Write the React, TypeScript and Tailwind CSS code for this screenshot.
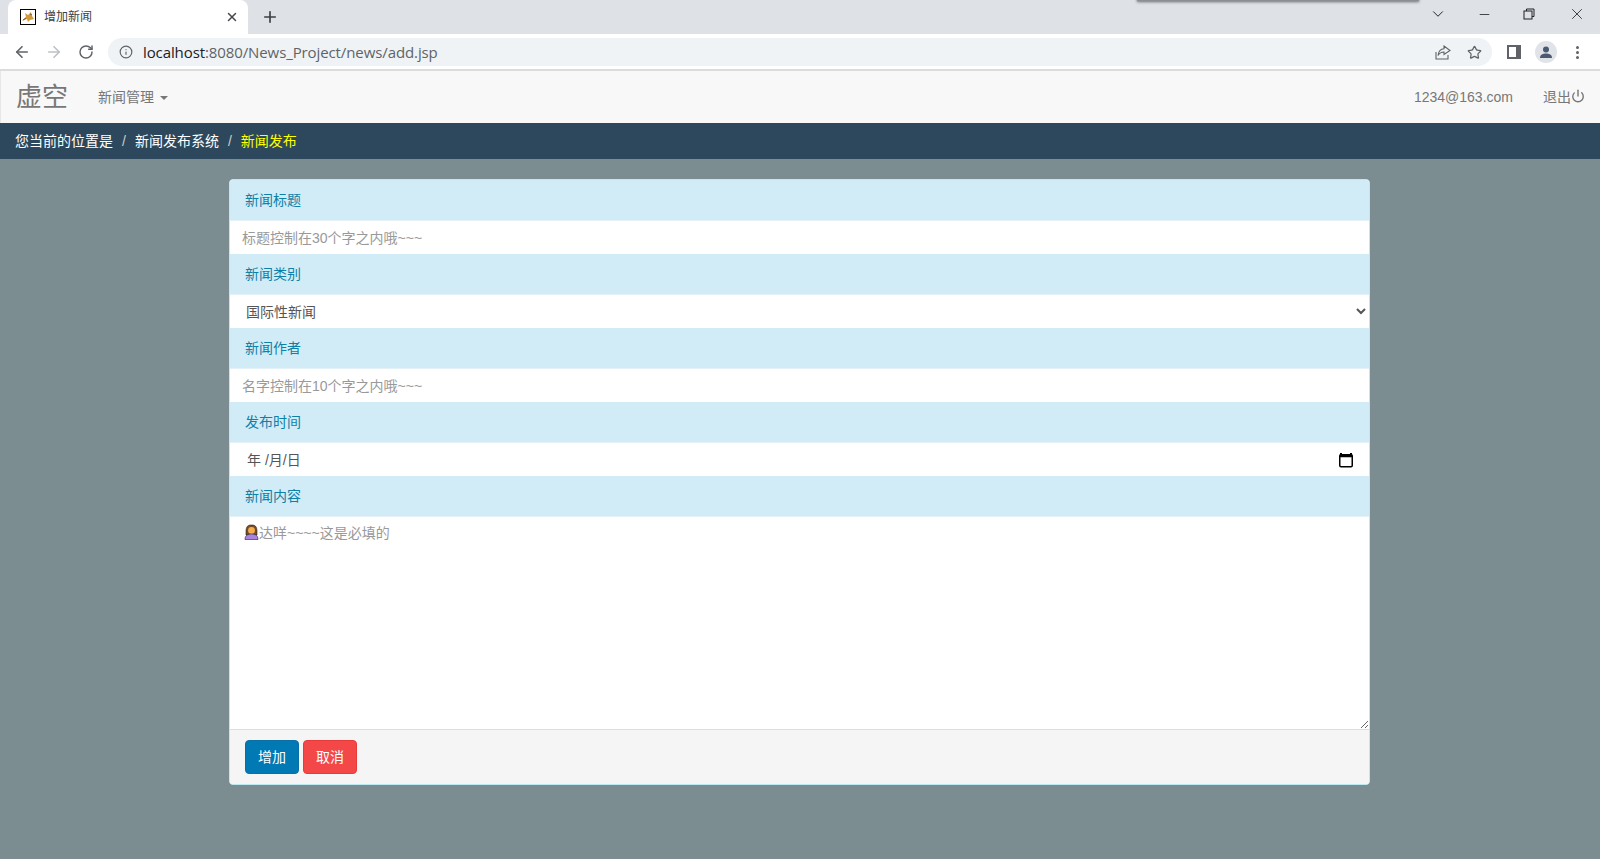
import React from 'react';
import { ArrowLeft, ArrowRight, RotateCw, Info, Star, X, Plus, ChevronDown, Minus, Power } from 'lucide-react';

const cjk = { fontFamily: '"Liberation Sans", "Noto Sans CJK SC", sans-serif' };

const Heading = ({ children }: { children: React.ReactNode }) => (
  <div className="h-[41px] bg-[#d2ecf7] border-b border-[#e4f1f8] pl-[15px] flex items-center text-sm text-[#0d80a8]">
    {children}
  </div>
);

function TabBar() {
  return (
    <div className="relative h-[34px] bg-[#dee1e6] flex items-end">
      {/* shadow of another window peeking in */}
      <div className="absolute left-[1137px] top-[-4px] w-[282px] h-[5px] bg-[#8c9095] shadow-[0_1px_3px_rgba(60,60,60,0.7)]" />
      <div className="ml-2 w-[240px] h-[34px] bg-white rounded-t-lg flex items-center pl-[12px] pr-[9px]">
        <svg width="16" height="16" viewBox="0 0 16 16" className="shrink-0">
          <rect x="0.5" y="0.5" width="15" height="15" fill="#fff" stroke="#000" />
          <path d="M2 12 L6 8 L5 4 L8 6 L11 3 L12 7 L14 10 L10 11 L8 13 L7 10 Z" fill="#d39a3a" />
          <path d="M3 11 L6 9 M10 5 L12 6" stroke="#6d5a3a" strokeWidth="1" />
        </svg>
        <span className="ml-2 text-xs text-[#3c4043] flex-1">增加新闻</span>
        <X size={14} strokeWidth={2.5} className="text-[#45484c]" />
      </div>
      <Plus size={18} strokeWidth={2.2} className="ml-[13px] mb-[8px] text-[#3c4043]" />
      <div className="ml-auto flex items-center self-start h-[28px] text-[#202124]">
        <ChevronDown size={18} strokeWidth={1.3} className="mr-[30px]" />
        <Minus size={15} strokeWidth={1.3} className="mr-[31px]" />
        <svg width="12" height="12" viewBox="0 0 12 12" fill="none" stroke="currentColor" className="mr-[33px]">
          <rect x="1" y="3" width="8" height="8" />
          <path d="M3.5 3 V1 H11 V8.5 H9" />
        </svg>
        <X size={18} strokeWidth={1.1} className="mr-[14px]" />
      </div>
    </div>
  );
}

function Toolbar() {
  return (
    <div className="h-[37px] bg-white border-b-2 border-[#dcdcdc] flex items-start pt-[4px] shrink-0">
      <ArrowLeft size={18} strokeWidth={2.2} className="ml-[13px] mt-[5px] text-[#5f6368]" />
      <ArrowRight size={18} strokeWidth={2.2} className="ml-[14px] mt-[5px] text-[#bdc1c6]" />
      <RotateCw size={16} strokeWidth={2.2} className="ml-[15px] mt-[6px] text-[#5f6368]" />
      <div className="ml-[14px] w-[1384px] h-[28px] rounded-full bg-[#eff3f5] flex items-center pl-[11px] pr-[10px]">
        <Info size={14} strokeWidth={2} className="text-[#5f6368]" />
        <span className="ml-[10px] text-[15px] tracking-[-0.1px] text-[#5f6368]" style={{ fontFamily: '"Open Sans", sans-serif' }}>
          <span className="text-[#202124]">localhost</span>:8080/News_Project/news/add.jsp
        </span>
        <svg width="16" height="16" viewBox="0 0 16 16" fill="none" stroke="#5f6368" strokeWidth="1.1" className="ml-auto mr-[16px]">
          <path d="M1 8 V15 H13 V11" />
          <path d="M9 2 L15 6.5 L9 10.5 V8 C6 8 4.5 9 3 11.5 C3.5 7.5 5.5 5 9 4.8 Z" />
        </svg>
        <Star size={15} strokeWidth={2} className="mr-0 text-[#5f6368]" />
      </div>
      <svg width="14" height="14" viewBox="0 0 14 14" className="ml-[15px] mt-[7px]">
        <rect width="14" height="14" fill="#5f6368" />
        <rect x="2" y="2" width="7" height="10" fill="#fff" />
      </svg>
      <div className="ml-[14px] mt-[3px] w-[22px] h-[22px] rounded-full bg-[#e0e3e8] flex items-center justify-center">
        <svg width="14" height="14" viewBox="0 0 14 14" fill="#4a5a70">
          <circle cx="7" cy="4.5" r="3" />
          <path d="M1 13 C1 9.5 4 8.5 7 8.5 C10 8.5 13 9.5 13 13 Z" />
        </svg>
      </div>
      <div className="ml-[19px] mt-[8px] flex flex-col gap-[2px]">
        <span className="w-[3px] h-[3px] rounded-full bg-[#5f6368]" />
        <span className="w-[3px] h-[3px] rounded-full bg-[#5f6368]" />
        <span className="w-[3px] h-[3px] rounded-full bg-[#5f6368]" />
      </div>
    </div>
  );
}

function Navbar() {
  return (
    <div className="h-[52px] bg-[#f8f8f8] border-l border-[#e7e7e7] flex items-center text-sm text-[#777] pl-[15px] pr-[15px]">
      <span className="text-[26px] leading-none">虚空</span>
      <span className="ml-[30px]">新闻管理</span>
      <span className="ml-[6px] mt-[1px] w-0 h-0 border-x-4 border-x-transparent border-t-4 border-t-[#777]" />
      <span className="ml-auto">1234@163.com</span>
      <span className="ml-[30px]">退出</span>
      <Power size={14} strokeWidth={2.4} className="mb-[2px]" />
    </div>
  );
}

function Breadcrumb() {
  return (
    <div className="h-[36px] bg-[#2d485c] flex items-center pl-[15px] text-sm text-white">
      <span>您当前的位置是</span>
      <span className="mx-[9px] text-[#ccc]">/</span>
      <span>新闻发布系统</span>
      <span className="mx-[9px] text-[#ccc]">/</span>
      <span className="text-[#ffff00]">新闻发布</span>
    </div>
  );
}

export default function App() {
  return (
    <div className="w-[1600px] h-[859px] overflow-hidden flex flex-col bg-[#7c8d91]" style={cjk}>
      <TabBar />
      <Toolbar />
      <Navbar />
      <Breadcrumb />

      <div className="flex justify-center pt-[20px]">
        <div className="w-[1141px] ml-[-1px] rounded-[4px] border border-[#bce8f1] bg-white overflow-hidden">
          <Heading>新闻标题</Heading>
          <input
            className="block w-full h-[33px] px-3 text-sm outline-none placeholder:text-[#999]"
            placeholder="标题控制在30个字之内哦~~~"
          />
          <Heading>新闻类别</Heading>
          <select className="block w-full h-[33px] px-3 text-sm text-[#555] bg-white outline-none">
            <option>国际性新闻</option>
          </select>
          <Heading>新闻作者</Heading>
          <input
            className="block w-full h-[33px] px-3 text-sm outline-none placeholder:text-[#999]"
            placeholder="名字控制在10个字之内哦~~~"
          />
          <Heading>发布时间</Heading>
          <div className="h-[33px] flex items-center pl-[17px] pr-[15px] text-sm text-[#555]">
            <span>年 /月/日</span>
            <svg width="16" height="16" viewBox="0 0 16 16" className="ml-auto">
              <path d="M3 1 V3 M13 1 V3" stroke="#000" strokeWidth="2" />
              <rect x="1.75" y="2.75" width="12.5" height="12" rx="1.2" fill="#fff" stroke="#000" strokeWidth="1.5" />
              <rect x="1.75" y="2.75" width="12.5" height="2.5" fill="#000" />
            </svg>
          </div>
          <Heading>新闻内容</Heading>
          <div className="relative">
            <textarea
              className="block w-full h-[212px] pl-[29px] pr-3 py-[6px] text-sm outline-none placeholder:text-[#999]"
              placeholder="达咩~~~~这是必填的"
            />
            {/* emoji in the placeholder */}
            <svg width="15" height="16" viewBox="0 0 15 16" className="absolute left-[14px] top-[7px]">
              <path d="M2 8 C2 2 4 1 7.5 1 C11 1 13 2 13 8 L13 11 H2 Z" fill="#7a4a22" stroke="#222" strokeWidth="0.6" />
              <circle cx="7.5" cy="6.5" r="3.4" fill="#f5b04c" />
              <path d="M1 15.5 C1 11 4 10 7.5 10 C11 10 14 11 14 15.5 Z" fill="#a884e0" stroke="#222" strokeWidth="0.6" />
            </svg>
          </div>
          <div className="h-[55px] bg-[#f5f5f5] border-t border-[#ddd] flex items-center gap-[4px] pl-[15px]">
            <button className="w-[54px] h-[34px] rounded-[4px] bg-[#0079b5] border border-[#0a6fa5] text-white text-sm">增加</button>
            <button className="w-[54px] h-[34px] rounded-[4px] bg-[#f44848] border border-[#e93a3a] text-white text-sm">取消</button>
          </div>
        </div>
      </div>
    </div>
  );
}
